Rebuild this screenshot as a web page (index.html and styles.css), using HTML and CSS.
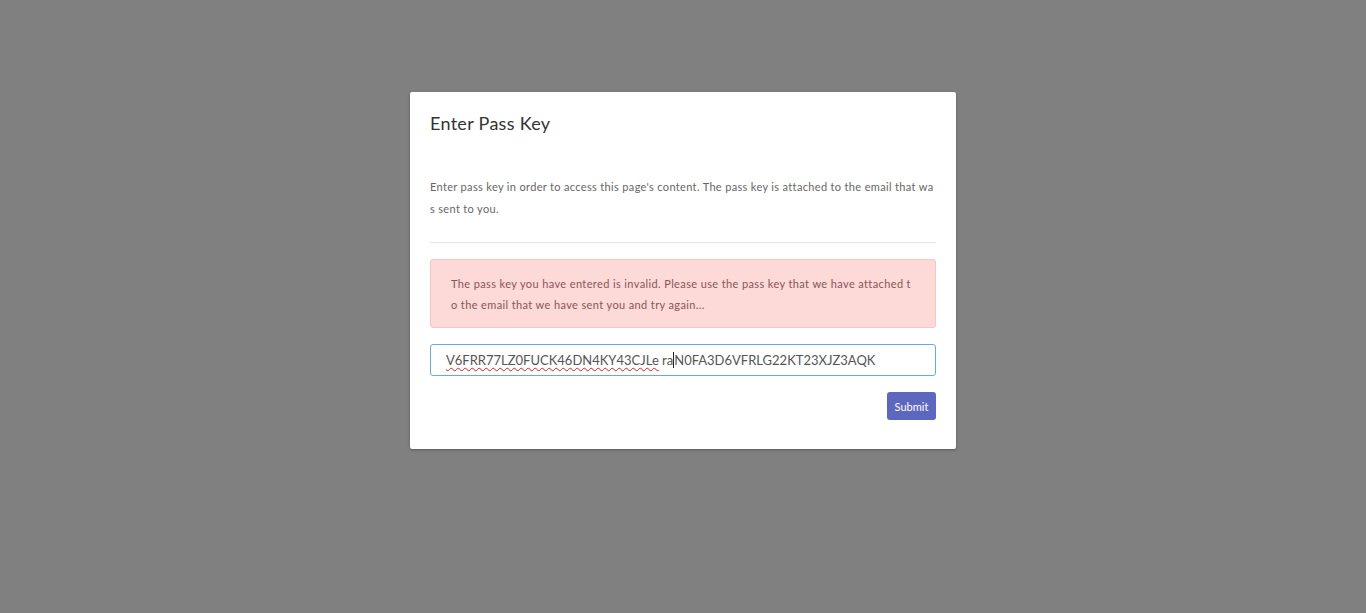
FILE: index.html
```html
<!DOCTYPE html>
<html>
<head>
<meta charset="utf-8">
<title>Enter Pass Key</title>
<link rel="stylesheet" href="styles.css">
</head>
<body>
<div class="overlay">
  <div class="card">
    <h4 class="title">Enter Pass Key</h4>
    <p class="desc">Enter pass key in order to access this page's content. The pass key is attached to the email that was sent to you.</p>
    <hr class="divider">
    <div class="alert">The pass key you have entered is invalid. Please use the pass key that we have attached to the email that we have sent you and try again...</div>
    <div class="input"><span class="misspelled">V6FRR77LZ0FUCK46DN4KY43CJLe</span> ra<span class="caret"></span>N0FA3D6VFRLG22KT23XJZ3AQK</div>
    <div class="actions"><button class="btn">Submit</button></div>
  </div>
</div>
</body>
</html>
```
FILE: styles.css
```css
html, body {
  margin: 0;
  padding: 0;
  height: 100%;
}
body {
  background: #808080;
  font-family: Lato, "Open Sans", sans-serif;
}
.overlay {
  display: flex;
  justify-content: center;
  padding-top: 92px;
}
.card {
  width: 506px;
  background: #fff;
  padding: 20px 20px 29px;
  border-radius: 2px;
  box-shadow: 0 1px 3px rgba(0,0,0,0.3);
}
.title {
  margin: 0;
  font-size: 18px;
  font-weight: 400;
  line-height: 23px;
  letter-spacing: 0.3px;
  color: #333;
}
.desc {
  margin: 41px 0 0;
  font-size: 11px;
  line-height: 22px;
  letter-spacing: 0.34px;
  color: #666;
  word-break: break-all;
}
.divider {
  margin: 22px 0 0;
  border: 0;
  border-top: 1px solid #e3e3e3;
}
.alert {
  margin-top: 16px;
  background: #fdd9d8;
  border: 1px solid #f7c6c5;
  border-radius: 3px;
  padding: 13px 20px 12px 20px;
  font-size: 11px;
  line-height: 21px;
  letter-spacing: 0.38px;
  color: #8a5656;
  word-break: break-all;
}
.input {
  margin-top: 16px;
  height: 30px;
  border: 1px solid #66a8ec;
  border-radius: 3px;
  padding: 0 15px;
  font-size: 13px;
  line-height: 30px;
  color: #555;
  white-space: nowrap;
  overflow: hidden;
}
.misspelled {
  text-decoration: underline wavy #e02020;
  text-decoration-thickness: 1px;
  text-underline-offset: 2px;
}
.caret {
  display: inline-block;
  width: 1px;
  height: 16px;
  background: #222;
  vertical-align: -3px;
}
.actions {
  display: flex;
  justify-content: flex-end;
  margin-top: 16px;
}
.btn {
  width: 49px;
  height: 28px;
  background: #5c67c0;
  border: 0;
  border-radius: 3px;
  color: #fff;
  font-family: Lato, "Open Sans", sans-serif;
  font-size: 11px;
  padding: 0;
}
```
